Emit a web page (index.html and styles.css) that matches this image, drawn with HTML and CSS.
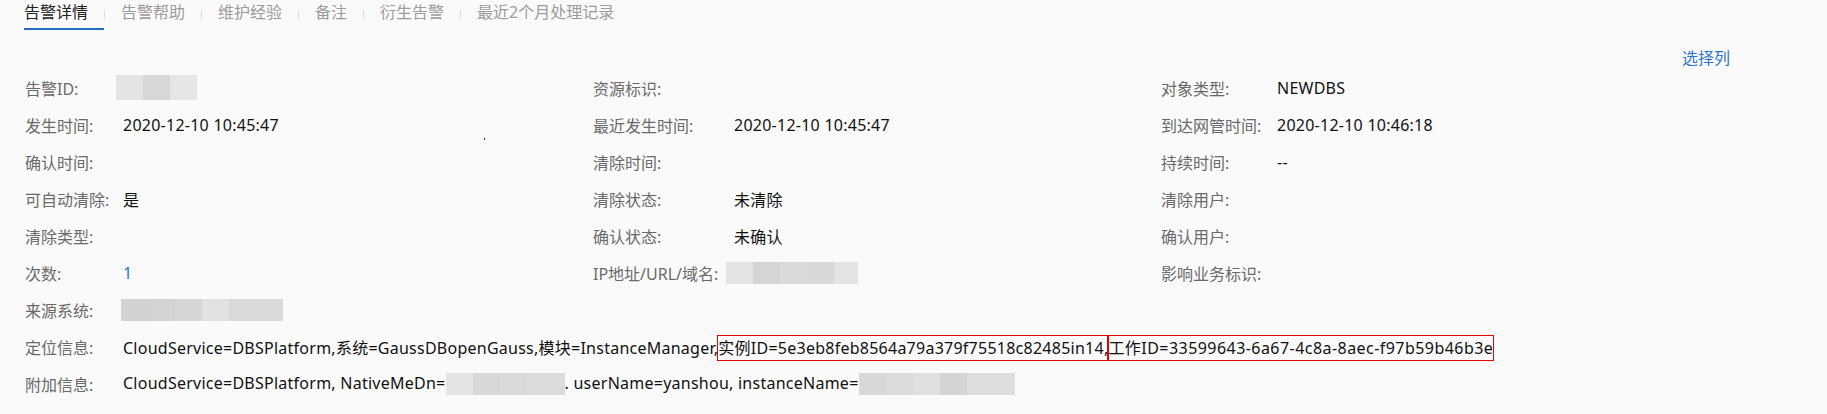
FILE: index.html
```html
<!DOCTYPE html>
<html lang="zh-CN">
<head>
<meta charset="utf-8">
<title>告警详情</title>
<link rel="stylesheet" href="styles.css">
</head>
<body>
<div class="page">
  <nav class="tabs">
    <span class="tab active">告警详情</span><span class="sep"></span>
    <span class="tab">告警帮助</span><span class="sep"></span>
    <span class="tab">维护经验</span><span class="sep"></span>
    <span class="tab">备注</span><span class="sep"></span>
    <span class="tab">衍生告警</span><span class="sep"></span>
    <span class="tab">最近2个月处理记录</span>
  </nav>
  <div class="toolbar"><span class="link">选择列</span></div>
  <div class="grid">
    <div class="lbl">告警ID:</div><div class="val"><span class="blur b-id"></span></div>
    <div class="lbl">资源标识:</div><div class="val"></div>
    <div class="lbl">对象类型:</div><div class="val">NEWDBS</div>

    <div class="lbl">发生时间:</div><div class="val">2020-12-10 10:45:47</div>
    <div class="lbl">最近发生时间:</div><div class="val">2020-12-10 10:45:47</div>
    <div class="lbl">到达网管时间:</div><div class="val">2020-12-10 10:46:18</div>

    <div class="lbl">确认时间:</div><div class="val"></div>
    <div class="lbl">清除时间:</div><div class="val"></div>
    <div class="lbl">持续时间:</div><div class="val">--</div>

    <div class="lbl">可自动清除:</div><div class="val">是</div>
    <div class="lbl">清除状态:</div><div class="val">未清除</div>
    <div class="lbl">清除用户:</div><div class="val"></div>

    <div class="lbl">清除类型:</div><div class="val"></div>
    <div class="lbl">确认状态:</div><div class="val">未确认</div>
    <div class="lbl">确认用户:</div><div class="val"></div>

    <div class="lbl">次数:</div><div class="val num">1</div>
    <div class="lbl">IP地址/URL/域名:</div><div class="val"><span class="blur b-ip"></span></div>
    <div class="lbl">影响业务标识:</div><div class="val"></div>

    <div class="lbl">来源系统:</div><div class="val"><span class="blur b-src"></span></div>
    <div class="lbl"></div><div class="val"></div>
    <div class="lbl"></div><div class="val"></div>

    <div class="lbl">定位信息:</div>
    <div class="val wide">CloudService=DBSPlatform,系统=GaussDBopenGauss,模块=InstanceManager,<span class="mark">实例ID=5e3eb8feb8564a79a379f75518c82485in14,</span><span class="mark m2">工作ID=33599643-6a67-4c8a-8aec-f97b59b46b3e</span></div>

    <div class="lbl">附加信息:</div>
    <div class="val wide">CloudService=DBSPlatform, NativeMeDn=<span class="blur b-dn"></span>. userName=yanshou, instanceName=<span class="blur b-inst"></span></div>
  </div>
  <span class="dot"></span>
</div>
</body>
</html>
```

FILE: styles.css
```css
html, body {
  margin: 0;
  padding: 0;
  background: #fafafa;
}

body {
  font-family: "Noto Sans", "Noto Sans CJK SC", sans-serif;
  font-size: 16px;
  color: #1a1a1a;
}

.page {
  position: relative;
  width: 1706px;
  padding-left: 24px;
}

.tabs {
  display: flex;
  align-items: flex-start;
  height: 30px;
}

.tab {
  display: block;
  line-height: 25px;
  padding-right: 16px;
  padding-bottom: 3px;
  border-bottom: 2px solid transparent;
  color: #9c9c9c;
  white-space: nowrap;
}

.tab.active {
  color: #222;
  border-bottom-color: #1f6ebf;
}

.sep {
  display: block;
  width: 1px;
  height: 9px;
  margin-top: 10px;
  margin-right: 16px;
  background: #dcdcdc;
}

.toolbar {
  height: 39px;
  box-sizing: border-box;
  padding-top: 17px;
  display: flex;
  justify-content: flex-end;
}

.link {
  line-height: 22px;
  color: #2f74c6;
}

.grid {
  display: grid;
  grid-template-columns: 98px 470px 141px 427px 116px 454px;
  grid-auto-rows: 37px;
  align-items: center;
  margin-left: 1px;
}

.lbl {
  color: #6a6a6a;
  white-space: nowrap;
}

.val {
  color: #111;
  white-space: nowrap;
  display: flex;
  align-items: center;
  letter-spacing: 0.25px;
}

.val.num {
  color: #2a78d0;
}

.val.wide {
  grid-column: 2 / -1;
  display: block;
}

.mark {
  outline: 1px solid #e80000;
  padding: 1px 0;
}

.mark.m2 {
  letter-spacing: 0.45px;
}

.blur {
  display: inline-block;
  vertical-align: middle;
}

.b-id {
  width: 81px;
  height: 25px;
  margin-left: -7px;
  background: linear-gradient(to right, #e4e4e4 0 27px, #d7d7d7 27px 54px, #e6e6e6 54px 81px);
}

.b-src {
  width: 162px;
  height: 22px;
  margin-left: -2px;
  background: linear-gradient(to right, #d2d2d2 0 27px, #d3d3d3 27px 54px, #d6d6d6 54px 81px, #e2e2e2 81px 108px, #d9d9d9 108px 162px);
}

.b-ip {
  width: 132px;
  height: 22px;
  margin-left: -8px;
  background: linear-gradient(to right, #e4e4e4 0 27px, #d5d5d5 27px 54px, #dadada 54px 81px, #d8d8d8 81px 108px, #e3e3e3 108px 132px);
}

.b-dn {
  width: 119px;
  height: 22px;
  background: linear-gradient(to right, #e3e3e3 0 27px, #d8d8d8 27px 54px, #dadada 54px 81px, #dcdcdc 81px 119px);
}

.b-inst {
  width: 156px;
  height: 22px;
  background: linear-gradient(to right, #d8d8d8 0 27px, #dcdcdc 27px 54px, #e0e0e0 54px 81px, #d4d4d4 81px 108px, #dddddd 108px 156px);
}

.dot {
  position: absolute;
  left: 484px;
  top: 138px;
  width: 1px;
  height: 2px;
  background: #c40000;
}
```
